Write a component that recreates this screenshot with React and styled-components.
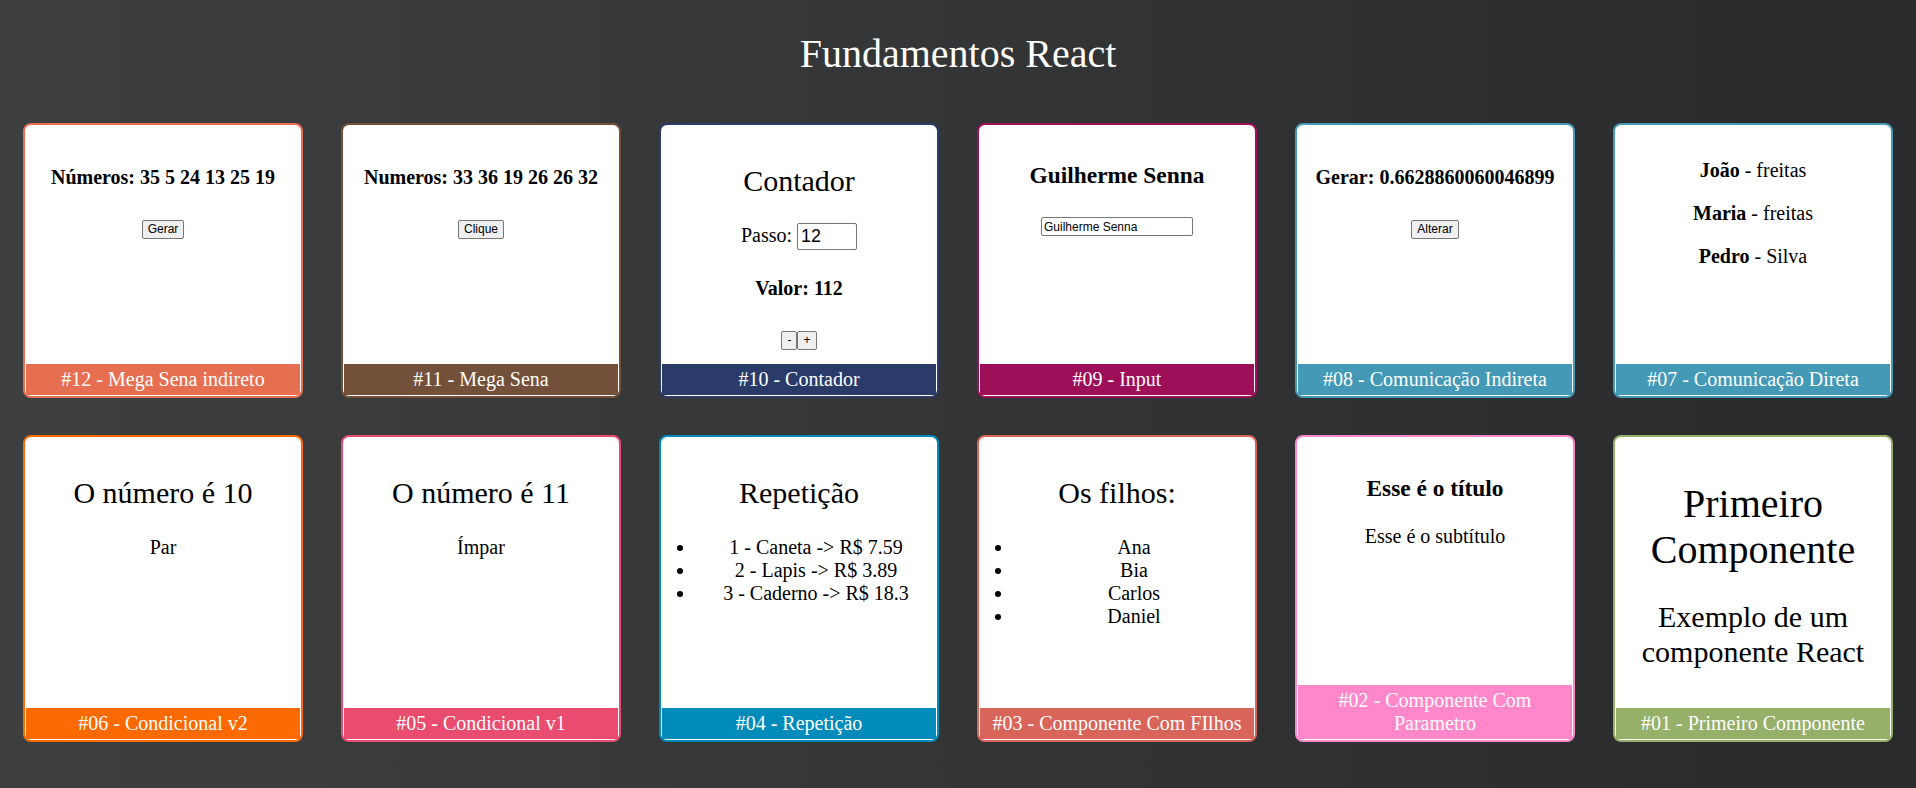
import React from 'react'
import styled, { createGlobalStyle } from 'styled-components'

const GlobalStyle = createGlobalStyle`
  html, body {
    margin: 0;
    padding: 0;
  }
  body {
    font-family: "Liberation Serif", "Times New Roman", serif;
    font-size: 20px;
    line-height: 1.15;
  }
`

const Page = styled.div`
  min-height: 788px;
  box-sizing: border-box;
  padding-top: 31px;
  background: linear-gradient(to right, #3e3f41, #292a2c);
  color: #fff;
`

const Title = styled.h1`
  margin: 0 0 46px;
  font-size: 40px;
  font-weight: normal;
  line-height: 46px;
  text-align: center;
`

const Cards = styled.div`
  display: flex;
  flex-wrap: wrap;
  justify-content: center;
  gap: 37px 38px;
`

const Card = styled.div`
  width: 280px;
  box-sizing: border-box;
  display: flex;
  flex-direction: column;
  border: 2px solid ${(p) => p.$color};
  border-radius: 8px;
  padding: 1px;
  background: #fff;
  color: #000;
`

const Content = styled.div`
  flex: 1;
  padding: 13px 0 14px;
  text-align: center;
`

const Footer = styled.div`
  background: ${(p) => p.$color};
  color: #fff;
  text-align: center;
  padding: 4px 10px;
  font-size: 20px;
  line-height: 23px;
`

const Big = styled.h1`
  margin: 30px 0 26.8px;
  font-size: 40px;
  font-weight: normal;
  line-height: 46px;
`

const Heading = styled.h2`
  margin: 24.9px 0;
  font-size: 30px;
  font-weight: normal;
  line-height: 34.5px;
`

const Strong = styled.h3`
  margin: 23.4px 0;
  font-size: 23.4px;
  font-weight: bold;
  line-height: 1.15;
`

const Label = styled.h4`
  margin: 26.6px 0;
  font-size: 20px;
  font-weight: bold;
`

const Text = styled.p`
  margin: 20px 0;
`

const List = styled.ul`
  margin: 20px 0;
  padding-left: 34px;
`

const Line = styled.div``

const Button = styled.button`
  font-family: "Liberation Sans", Arial, sans-serif;
  font-size: 12px;
  line-height: 15px;
  color: #000;
  background: #efefef;
  border: 1px solid #767676;
  border-radius: 2px;
  padding: 1px 5px;
  margin: 0;
`

const NumberInput = styled.input`
  width: 60px;
  height: 27px;
  box-sizing: border-box;
  font-family: "Liberation Sans", Arial, sans-serif;
  font-size: 18px;
  padding: 1px 3px;
  border: 1px solid #767676;
  border-radius: 2px;
  vertical-align: baseline;
  -moz-appearance: textfield;
  &::-webkit-inner-spin-button,
  &::-webkit-outer-spin-button {
    -webkit-appearance: none;
    margin: 0;
  }
`

const TextInput = styled.input`
  width: 152px;
  height: 19px;
  box-sizing: border-box;
  font-family: "Liberation Sans", Arial, sans-serif;
  font-size: 12px;
  padding: 1px 2px;
  border: 1px solid #767676;
  border-radius: 2px;
`

const cards = [
  {
    color: '#e76f51',
    footer: '#12 - Mega Sena indireto',
    body: (
      <>
        <Label>Números: 35 5 24 13 25 19</Label>
        <Line><Button>Gerar</Button></Line>
      </>
    ),
  },
  {
    color: '#735039',
    footer: '#11 - Mega Sena',
    body: (
      <>
        <Label>Numeros: 33 36 19 26 26 32</Label>
        <Line><Button>Clique</Button></Line>
      </>
    ),
  },
  {
    color: '#2b3b69',
    footer: '#10 - Contador',
    body: (
      <>
        <Heading>Contador</Heading>
        <Line>Passo: <NumberInput type="number" defaultValue={12} /></Line>
        <Label>Valor: 112</Label>
        <Line><Button>-</Button><Button>+</Button></Line>
      </>
    ),
  },
  {
    color: '#9d1059',
    footer: '#09 - Input',
    body: (
      <>
        <Strong>Guilherme Senna</Strong>
        <Line><TextInput type="text" defaultValue="Guilherme Senna" /></Line>
      </>
    ),
  },
  {
    color: '#4499b7',
    footer: '#08 - Comunicação Indireta',
    body: (
      <>
        <Label>Gerar: 0.6628860060046899</Label>
        <Line><Button>Alterar</Button></Line>
      </>
    ),
  },
  {
    color: '#4499b7',
    footer: '#07 - Comunicação Direta',
    body: (
      <>
        <Text><strong>João</strong> - freitas</Text>
        <Text><strong>Maria</strong> - freitas</Text>
        <Text><strong>Pedro</strong> - Silva</Text>
      </>
    ),
  },
  {
    color: '#fb6a00',
    footer: '#06 - Condicional v2',
    body: (
      <>
        <Heading>O número é 10</Heading>
        <Text>Par</Text>
      </>
    ),
  },
  {
    color: '#e94c6f',
    footer: '#05 - Condicional v1',
    body: (
      <>
        <Heading>O número é 11</Heading>
        <Text>Ímpar</Text>
      </>
    ),
  },
  {
    color: '#008bbb',
    footer: '#04 - Repetição',
    body: (
      <>
        <Heading>Repetição</Heading>
        <List>
          <li>1 - Caneta -&gt; R$ 7.59</li>
          <li>2 - Lapis -&gt; R$ 3.89</li>
          <li>3 - Caderno -&gt; R$ 18.3</li>
        </List>
      </>
    ),
  },
  {
    color: '#d9645a',
    footer: '#03 - Componente Com FIlhos',
    body: (
      <>
        <Heading>Os filhos:</Heading>
        <List>
          <li>Ana</li>
          <li>Bia</li>
          <li>Carlos</li>
          <li>Daniel</li>
        </List>
      </>
    ),
  },
  {
    color: '#ff87ca',
    footer: '#02 - Componente Com Parametro',
    body: (
      <>
        <Strong>Esse é o título</Strong>
        <Text>Esse é o subtítulo</Text>
      </>
    ),
  },
  {
    color: '#96b06a',
    footer: '#01 - Primeiro Componente',
    body: (
      <>
        <Big>Primeiro Componente</Big>
        <Heading>Exemplo de um componente React</Heading>
      </>
    ),
  },
]

const App = () => {
  return (
    <Page>
      <GlobalStyle />
      <Title>Fundamentos React</Title>
      <Cards>
        {cards.map((card) => (
          <Card key={card.footer} $color={card.color}>
            <Content>{card.body}</Content>
            <Footer $color={card.color}>{card.footer}</Footer>
          </Card>
        ))}
      </Cards>
    </Page>
  )
}

export default App
